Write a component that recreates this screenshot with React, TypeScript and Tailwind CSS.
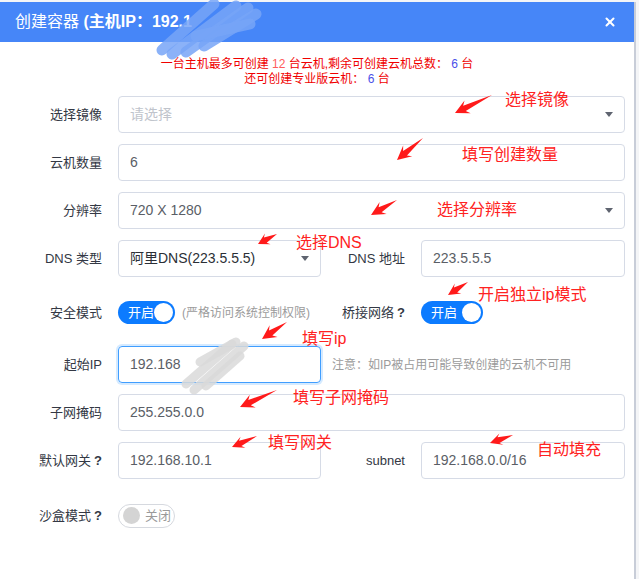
import { X } from "lucide-react";

const FONT = { fontFamily: '"Liberation Sans", "Noto Sans CJK SC", sans-serif' };

type Pt = [number, number];

// annotation arrow: tapered shaft from tail to a barbed head at tip
function arrowPoints(tail: Pt, tip: Pt, head = 14, barb = 7, inner = 3) {
  const dx = tip[0] - tail[0];
  const dy = tip[1] - tail[1];
  const len = Math.hypot(dx, dy);
  const ux = dx / len;
  const uy = dy / len;
  const nx = -uy;
  const ny = ux;
  const bx = tip[0] - ux * head;
  const by = tip[1] - uy * head;
  const ix = tip[0] - ux * head * 0.75;
  const iy = tip[1] - uy * head * 0.75;
  const pts: Pt[] = [
    tip,
    [bx + nx * barb, by + ny * barb],
    [ix + nx * inner, iy + ny * inner],
    tail,
    [ix - nx * inner, iy - ny * inner],
    [bx - nx * barb, by - ny * barb],
  ];
  return pts.map((p) => p.join(",")).join(" ");
}

const arrows: { tail: Pt; tip: Pt; head?: number; barb?: number }[] = [
  { tail: [492, 95], tip: [455, 113] },
  { tail: [423, 138], tip: [397, 160] },
  { tail: [397, 200], tip: [371, 215] },
  { tail: [277, 234], tip: [258, 244], head: 11, barb: 6 },
  { tail: [468, 282], tip: [448, 295], head: 12, barb: 6 },
  { tail: [287, 322], tip: [262, 339] },
  { tail: [277, 390], tip: [240, 407] },
  { tail: [257, 436], tip: [232, 447], head: 12, barb: 6 },
  { tail: [513, 435], tip: [490, 443], head: 12, barb: 6 },
];

const notes: { text: string; x: number; y: number }[] = [
  { text: "选择镜像", x: 505, y: 100 },
  { text: "填写创建数量", x: 462, y: 155 },
  { text: "选择分辨率", x: 437, y: 210 },
  { text: "选择DNS", x: 296, y: 243 },
  { text: "开启独立ip模式", x: 478, y: 295 },
  { text: "填写ip", x: 302, y: 339 },
  { text: "填写子网掩码", x: 293, y: 398 },
  { text: "填写网关", x: 268, y: 443 },
  { text: "自动填充", x: 537, y: 450 },
];

const Caret = () => (
  <span className="ml-auto h-0 w-0 border-x-[4px] border-t-[5px] border-x-transparent border-t-[#5f6470]" />
);

const Label = ({ children, w = "w-[118px]", q = false }: { children: React.ReactNode; w?: string; q?: boolean }) => (
  <div className={`${w} shrink-0 pr-4 text-right text-[13px] text-[#333844]`}>
    {children}
    {q && <span className="ml-[3px] font-bold">?</span>}
  </div>
);

const Box = ({
  children,
  w = "flex-1",
  focus = false,
  caret = false,
  dark = false,
}: {
  children: React.ReactNode;
  w?: string;
  focus?: boolean;
  caret?: boolean;
  dark?: boolean;
}) => (
  <div
    className={`${w} flex h-[37px] items-center rounded-[4px] border px-[11px] text-[14px] ${
      focus ? "border-[#409eff] shadow-[0_0_0_2px_rgba(64,158,255,0.22)]" : "border-[#d6dbe6]"
    } ${dark ? "text-[#2b2f36]" : "text-[#5a5e66]"}`}
  >
    {children}
    {caret && <Caret />}
  </div>
);

const SwitchOn = ({ w = "w-[57px]" }: { w?: string }) => (
  <div className={`${w} flex h-[23px] items-center justify-between rounded-full bg-[#0c7bff] pl-[10px] pr-[2px]`}>
    <span className="text-[13px] text-white">开启</span>
    <span className="h-[19px] w-[19px] rounded-full bg-white" />
  </div>
);

const SwitchOff = () => (
  <div className="flex h-[24px] w-[57px] items-center gap-[5px] rounded-full border border-[#d6d9df] bg-white pl-[4px]">
    <span className="h-[17px] w-[17px] rounded-full bg-[#d4d4d4]" />
    <span className="text-[13px] text-[#9a9a9a]">关闭</span>
  </div>
);

export default function App() {
  return (
    <div className="relative h-[579px] w-[639px] overflow-hidden bg-[#f4f5f7] pt-[2px]" style={FONT}>
      <div className="h-[577px] w-[636px] border-r-2 border-[#c8cdd8] bg-white">
        {/* header */}
        <div className="flex h-[40px] items-center justify-between bg-[#4686f8] pl-[15px] pr-[17px] text-white">
          <div className="text-[16px]">
            创建容器 <span className="font-bold">(主机IP：192.1</span>
          </div>
          <X size={14} strokeWidth={3.5} />
        </div>

        {/* notice */}
        <div className="mt-[15px] text-center text-[12px] leading-[15px] text-[#f00000]">
          <div>
            一台主机最多可创建 <span className="text-[#ff5c5c]">12</span> 台云机,剩余可创建云机总数： <span className="text-[#4a50e8]">6</span> 台
          </div>
          <div>
            还可创建专业版云机： <span className="text-[#4a50e8]">6</span> 台
          </div>
        </div>

        {/* form */}
        <div className="mt-[9px] flex flex-col pr-[9px]">
          <div className="flex items-center">
            <Label>选择镜像</Label>
            <Box caret>
              <span className="text-[#c0c4cc]">请选择</span>
            </Box>
          </div>
          <div className="mt-[11px] flex items-center">
            <Label>云机数量</Label>
            <Box>6</Box>
          </div>
          <div className="mt-[11px] flex items-center">
            <Label>分辨率</Label>
            <Box caret>720 X 1280</Box>
          </div>
          <div className="mt-[11px] flex items-center">
            <Label>DNS 类型</Label>
            <Box w="w-[203px]" caret dark>
              阿里DNS(223.5.5.5)
            </Box>
            <Label w="w-[100px]">DNS 地址</Label>
            <Box>223.5.5.5</Box>
          </div>
          <div className="mt-[17px] flex h-[37px] items-center">
            <Label>安全模式</Label>
            <SwitchOn />
            <span className="ml-[7px] w-[139px] text-[12px] text-[#9b9b9b]">(严格访问系统控制权限)</span>
            <Label w="w-[100px]" q>
              桥接网络
            </Label>
            <SwitchOn w="w-[62px]" />
          </div>
          <div className="mt-[15px] flex items-center">
            <Label>起始IP</Label>
            <Box w="w-[203px]" focus>
              192.168
            </Box>
            <span className="ml-[11px] text-[12px] text-[#9b9b9b]">注意：如IP被占用可能导致创建的云机不可用</span>
          </div>
          <div className="mt-[11px] flex items-center">
            <Label>子网掩码</Label>
            <Box>255.255.0.0</Box>
          </div>
          <div className="mt-[11px] flex items-center">
            <Label q>默认网关</Label>
            <Box w="w-[203px]">192.168.10.1</Box>
            <Label w="w-[100px]">subnet</Label>
            <Box>192.168.0.0/16</Box>
          </div>
          <div className="mt-[18px] flex h-[37px] items-center">
            <Label q>沙盒模式</Label>
            <SwitchOff />
          </div>
        </div>
      </div>

      {/* redaction smears and annotation arrows */}
      <svg className="pointer-events-none absolute inset-0" width="639" height="579" viewBox="0 0 639 579">
        <g stroke="#77a5f7" strokeOpacity="0.85" strokeWidth="11" strokeLinecap="round" fill="none">
          <path d="M162 50 L214 4" />
          <path d="M172 54 L236 6" />
          <path d="M186 52 L248 8" />
          <path d="M204 46 L256 14" />
          <path d="M196 36 L250 24" />
        </g>
        <g stroke="#d9d9d9" strokeOpacity="0.85" strokeWidth="9" strokeLinecap="round" fill="none">
          <path d="M186 384 L232 344" />
          <path d="M194 390 L244 346" />
          <path d="M206 386 L240 356" />
          <path d="M200 362 L236 342" />
        </g>
        <g fill="#ff1a1a">
          {arrows.map((a, i) => (
            <polygon key={i} points={arrowPoints(a.tail, a.tip, a.head, a.barb)} />
          ))}
        </g>
      </svg>
      {notes.map((n) => (
        <span
          key={n.text}
          className="absolute whitespace-nowrap text-[16px] leading-[22px] text-[#ff2222]"
          style={{ left: n.x, top: n.y - 11 }}
        >
          {n.text}
        </span>
      ))}
    </div>
  );
}
